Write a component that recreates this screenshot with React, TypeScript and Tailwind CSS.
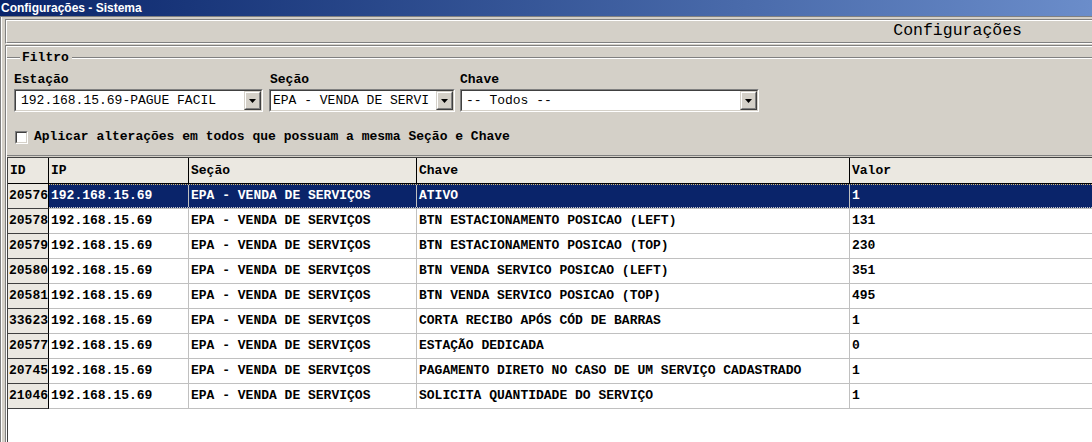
import React from "react";

const rows: [string, string, string][] = [
  ["20576", "ATIVO", "1"],
  ["20578", "BTN ESTACIONAMENTO POSICAO (LEFT)", "131"],
  ["20579", "BTN ESTACIONAMENTO POSICAO (TOP)", "230"],
  ["20580", "BTN VENDA SERVICO POSICAO (LEFT)", "351"],
  ["20581", "BTN VENDA SERVICO POSICAO (TOP)", "495"],
  ["33623", "CORTA RECIBO APÓS CÓD DE BARRAS", "1"],
  ["20577", "ESTAÇÃO DEDICADA", "0"],
  ["20745", "PAGAMENTO DIRETO NO CASO DE UM SERVIÇO CADASTRADO", "1"],
  ["21046", "SOLICITA QUANTIDADE DO SERVIÇO", "1"],
];

function DropButton() {
  return (
    <div className="w-[17px] h-full border-t border-l border-[#d4d0c8] border-r border-b border-r-[#404040] border-b-[#404040]">
      <div className="w-full h-full bg-[#d4d0c8] border-t border-l border-white border-r border-b border-r-[#808080] border-b-[#808080] flex items-center justify-center">
        <svg width="7" height="4" viewBox="0 0 7 4">
          <polygon points="0,0 7,0 3.5,4" fill="#000" />
        </svg>
      </div>
    </div>
  );
}

function Combo({ width, text, pad }: { width: string; text: string; pad: string }) {
  return (
    <div className={`${width} h-[23px] border-t border-l border-[#808080] border-r border-b border-r-white border-b-white`}>
      <div className="h-full flex bg-white border-t border-l border-[#404040] border-r border-b border-r-[#d4d0c8] border-b-[#d4d0c8]">
        <div className={`flex-1 flex items-center overflow-hidden whitespace-nowrap text-[13px] ${pad}`}>{text}</div>
        <DropButton />
      </div>
    </div>
  );
}

function Field({ label, children, labelPad = "" }: { label: string; children: React.ReactNode; labelPad?: string }) {
  return (
    <div className="flex flex-col">
      <div className={`h-[16px] flex items-center font-bold text-[13px] ${labelPad}`}>{label}</div>
      <div className="mt-[1px]">{children}</div>
    </div>
  );
}

const COLS = ["w-[140px]", "w-[228px]", "w-[433px]", "flex-1"];

export default function App() {
  return (
    <div className="w-[1092px] h-[442px] overflow-hidden bg-[#d4d0c8] flex flex-col text-black font-['Liberation_Mono','Courier_New',monospace]">
      {/* title bar */}
      <div className="h-[16px] shrink-0 bg-linear-to-r from-[#0a246a] to-[#6b8dca] text-white font-bold text-[12px] leading-[16px] pl-[1px] font-['Liberation_Sans',Arial,sans-serif]">
        Configurações - Sistema
      </div>

      <div className="flex-1 min-h-0 flex flex-col border-t border-l border-[#808080]">
        <div className="flex-1 min-h-0 flex flex-col border-l border-white pl-[3px] pt-[2px]">
          {/* header panel */}
          <div className="h-[25px] shrink-0 border-t border-l border-[#808080] border-b border-b-white">
            <div className="h-full border-t border-l border-white border-b border-b-[#808080] flex items-center justify-end pr-[70px] text-[16.5px]">
              Configurações
            </div>
          </div>

          {/* filter + grid panel */}
          <div className="mt-[1px] flex-1 min-h-0 flex flex-col border-t border-l border-[#808080]">
            <div className="flex-1 min-h-0 flex flex-col border-t border-l border-white">
              <div className="mt-[4px] h-[14px] flex items-center">
                <div className="w-[13px] h-[2px] border-t border-[#808080] border-b border-b-white" />
                <div className="pl-[2px] pr-[3px] font-bold text-[13px]">Filtro</div>
                <div className="flex-1 h-[2px] border-t border-[#808080] border-b border-b-white" />
              </div>

              <div className="mt-[7px] pl-[7px] flex gap-[6px]">
                <Field label="Estação">
                  <Combo width="w-[249px]" text="192.168.15.69-PAGUE FACIL" pad="pl-[5px]" />
                </Field>
                <Field label="Seção" labelPad="pl-[1px]">
                  <Combo width="w-[186px]" text="EPA - VENDA DE SERVI" pad="pl-[2px]" />
                </Field>
                <div className="-ml-[1px]">
                  <Field label="Chave">
                    <Combo width="w-[299px]" text="-- Todos --" pad="pl-[4px]" />
                  </Field>
                </div>
              </div>

              <div className="mt-[18px] h-[14px] pl-[8px] flex items-center gap-[6px]">
                <div className="w-[13px] h-[13px] border-t border-l border-[#808080] border-r border-b border-r-white border-b-white">
                  <div className="w-full h-full bg-white border-t border-l border-[#404040] border-r border-b border-r-[#d4d0c8] border-b-[#d4d0c8]" />
                </div>
                <span className="font-bold text-[13px]">Aplicar alterações em todos que possuam a mesma Seção e Chave</span>
              </div>

              {/* grid */}
              <div className="mt-[11px] flex-1 min-h-0 flex flex-col border-t border-[#808080] pt-[1px]">
                <div className="flex-1 min-h-0 flex flex-col bg-white border-t border-l border-[#404040] font-bold text-[13px]">
                  <div className="h-[26px] shrink-0 flex bg-[#ebe8e1] border-b border-black">
                    <div className="w-[41px] border-r border-black pl-[2px] flex items-center">ID</div>
                    {["IP", "Seção", "Chave", "Valor"].map((h, i) => (
                      <div key={h} className={`${COLS[i]} ${i < 3 ? "border-r border-black" : ""} pl-[2px] flex items-center`}>
                        {h}
                      </div>
                    ))}
                  </div>

                  {rows.map(([id, chave, valor], r) => {
                    const sel = r === 0;
                    const cells = ["192.168.15.69", "EPA - VENDA DE SERVIÇOS", chave, valor];
                    return (
                      <div key={id} className="h-[25px] shrink-0 flex">
                        <div className="w-[41px] bg-[#ebe8e1] border-r border-b border-[#404040] border-r-black pl-[1px] flex items-center overflow-hidden whitespace-nowrap">
                          {id}
                        </div>
                        <div className="flex-1 flex flex-col">
                          <div
                            className={`h-[24px] flex ${
                              sel
                                ? "bg-[#0a246a] text-white border-y border-dotted border-t-[#d6bc78] border-b-[#c8c8c8]"
                                : ""
                            }`}
                          >
                            {cells.map((c, i) => (
                              <div
                                key={i}
                                className={`${COLS[i]} ${i < 3 ? "border-r border-[#c0c0c0]" : ""} pl-[2px] flex items-center overflow-hidden whitespace-nowrap`}
                              >
                                {c}
                              </div>
                            ))}
                          </div>
                          <div className="h-px bg-[#c0c0c0]" />
                        </div>
                      </div>
                    );
                  })}
                </div>
              </div>
            </div>
          </div>
        </div>
      </div>
    </div>
  );
}
